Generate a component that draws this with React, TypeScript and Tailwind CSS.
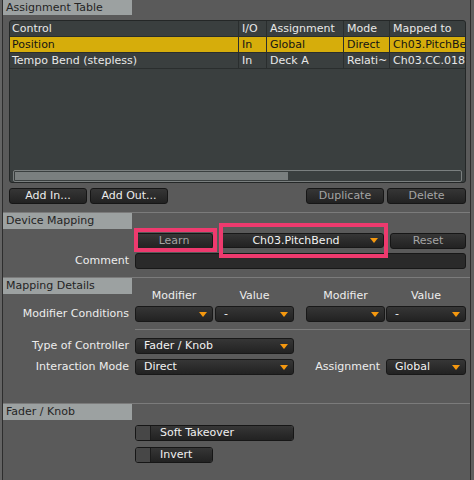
const Arrow = () => (
  <svg width="8" height="5" viewBox="0 0 8 5">
    <path d="M0 0H8L4 5Z" fill="#f5980f" />
  </svg>
);

const Dropdown = ({ label = "", className = "" }: any) => (
  <div
    className={`h-[16px] flex items-center rounded-[3px] border border-[#181818] bg-linear-to-b from-[#363636] to-[#222222] text-[#f2f2f2] ${className}`}
  >
    <span className="flex-1 pl-[8px] whitespace-nowrap overflow-hidden leading-[14px]">{label}</span>
    <span className="pr-[5px] flex">
      <Arrow />
    </span>
  </div>
);

const Button = ({ label, dim, className = "" }: any) => (
  <div
    className={`h-[16px] flex items-center justify-center rounded-[3px] border border-[#161616] bg-linear-to-b from-[#363636] to-[#222222] leading-[14px] ${
      dim ? "text-[#a4a4a4]" : "text-[#ececec]"
    } ${className}`}
  >
    {label}
  </div>
);

const Header = ({ title }: any) => (
  <div className="h-[16px] w-[129px] bg-[#9ca1a1] text-[#242424] pl-[3px] leading-[16px]">{title}</div>
);

const Label = ({ children }: any) => (
  <div className="w-[126px] text-right text-[#ededed] mr-[6px] leading-[16px]">{children}</div>
);

const Check = ({ label, className = "" }: any) => (
  <div className={`h-[16px] flex rounded-[3px] border border-[#161616] overflow-hidden ${className}`}>
    <div className="w-[15px] bg-[#474747] border-r border-[#1c1c1c]" />
    <div className="flex-1 bg-linear-to-b from-[#363636] to-[#222222] text-[#f0f0f0] pl-[9px] leading-[14px]">
      {label}
    </div>
  </div>
);

const rows = [
  ["Control", "I/O", "Assignment", "Mode", "Mapped to"],
  ["Position", "In", "Global", "Direct", "Ch03.PitchBend"],
  ["Tempo Bend (stepless)", "In", "Deck A", "Relati~", "Ch03.CC.018"],
];

export default function App() {
  return (
    <div className="w-[474px] h-[480px] flex bg-[#5f5f5f] overflow-hidden text-[11px] font-['DejaVu_Sans',sans-serif]">
      <div className="w-[2px] bg-[#646464]" />
      <div className="w-[469px] h-full flex flex-col border-l border-r border-[#2d2d2d] bg-[#5a5a5a]">
        {/* Assignment Table */}
        <div className="h-[212px] flex flex-col">
          <div className="h-[15px] w-[129px] bg-[#9ca1a1] text-[#242424] pl-[3px] leading-[15px]">
            Assignment Table
          </div>
          <div className="ml-[6px] mt-[5px] w-[457px] h-[163px] flex flex-col border border-[#242727] rounded-[3px] bg-[#3a3f3f]">
            {rows.map((r, i) => (
              <div
                key={i}
                className={`grid grid-cols-[228px_28px_77px_46px_1fr] h-[16px] border-b border-[#2a2e2e] ${
                  i === 1 ? "bg-[#d6ad0b] text-[#141414]" : "text-[#e8e8e8]"
                }`}
              >
                {r.map((c, j) => (
                  <div
                    key={j}
                    className={`leading-[15px] whitespace-nowrap overflow-hidden ${
                      j === 0 ? "pl-[2px]" : "pl-[3px] border-l border-[#2a2e2e]"
                    }`}
                  >
                    {c}
                  </div>
                ))}
              </div>
            ))}
            <div className="flex-1" />
            <div className="mx-[3px] h-[12px] border border-[#7a7f7f] rounded-[2px] p-[1px]">
              <div className="w-[273px] h-full bg-[#7a7f7f]" />
            </div>
          </div>
          <div className="flex mt-[5px] ml-[6px] mr-[4px]">
            <Button label="Add In..." className="w-[78px]" />
            <Button label="Add Out..." className="w-[78px] ml-[3px]" />
            <Button label="Duplicate" dim className="w-[78px] ml-auto" />
            <Button label="Delete" dim className="w-[79px] ml-[3px]" />
          </div>
        </div>

        {/* Device Mapping */}
        <div className="h-[65px] flex flex-col border-t border-[#7b7b7b]">
          <Header title="Device Mapping" />
          <div className="flex mt-[4px] h-[15px]">
            <div className="w-[132px]" />
            <div className="relative w-[78px]">
              <Button label="Learn" dim className="w-[78px] h-[15px]" />
              <div className="absolute -left-[1px] -top-[5px] -right-[4px] -bottom-[4px] border-[4px] border-[#ee3a6e]" />
            </div>
            <div className="relative ml-[8px] w-[163px]">
              <div className="h-[15px] flex items-center rounded-[3px] border border-[#181818] bg-linear-to-b from-[#363636] to-[#222222] text-[#f2f2f2]">
                <span className="flex-1 text-center leading-[13px] pl-[4px]">Ch03.PitchBend</span>
                <span className="pr-[5px] pl-[4px] flex">
                  <Arrow />
                </span>
              </div>
              <div className="absolute -left-[2px] -top-[10px] right-[-4px] -bottom-[10px] border-[4px] border-[#ee3a6e]" />
            </div>
            <Button label="Reset" dim className="w-[76px] h-[15px] ml-[6px]" />
          </div>
          <div className="flex mt-[5px] items-center">
            <Label>Comment</Label>
            <div className="w-[331px] h-[16px] rounded-[3px] border border-[#181818] bg-[#2a2a2a]" />
          </div>
        </div>

        {/* Mapping Details */}
        <div className="h-[126px] flex flex-col border-t border-[#7b7b7b]">
          <Header title="Mapping Details" />
          <div className="flex -mt-[5px] h-[13px] leading-[13px] text-[#ededed] text-center">
            <div className="w-[132px]" />
            <div className="w-[78px]">Modifier</div>
            <div className="w-[79px] ml-[2px]">Value</div>
            <div className="w-[79px] ml-[12px]">Modifier</div>
            <div className="w-[80px] ml-[1px]">Value</div>
          </div>
          <div className="flex mt-[4px]">
            <Label>Modifier Conditions</Label>
            <Dropdown className="w-[78px]" />
            <Dropdown label="-" className="w-[79px] ml-[2px]" />
            <Dropdown className="w-[79px] ml-[12px]" />
            <Dropdown label="-" className="w-[80px] ml-[1px]" />
          </div>
          <div className="mt-[7px] ml-[132px] h-[1px] bg-[#7b7b7b]" />
          <div className="flex mt-[8px]">
            <Label>Type of Controller</Label>
            <Dropdown label="Fader / Knob" className="w-[159px]" />
          </div>
          <div className="flex mt-[5px]">
            <Label>Interaction Mode</Label>
            <Dropdown label="Direct" className="w-[159px]" />
            <div className="w-[86px] text-right text-[#ededed] leading-[16px]">Assignment</div>
            <Dropdown label="Global" className="w-[80px] ml-[6px]" />
          </div>
        </div>

        {/* Fader / Knob */}
        <div className="flex-1 flex flex-col border-t border-[#7b7b7b]">
          <Header title="Fader / Knob" />
          <Check label="Soft Takeover" className="w-[159px] mt-[5px] ml-[132px]" />
          <Check label="Invert" className="w-[78px] mt-[6px] ml-[132px]" />
        </div>
      </div>
      <div className="flex-1 bg-[#5f5f5f]" />
    </div>
  );
}
